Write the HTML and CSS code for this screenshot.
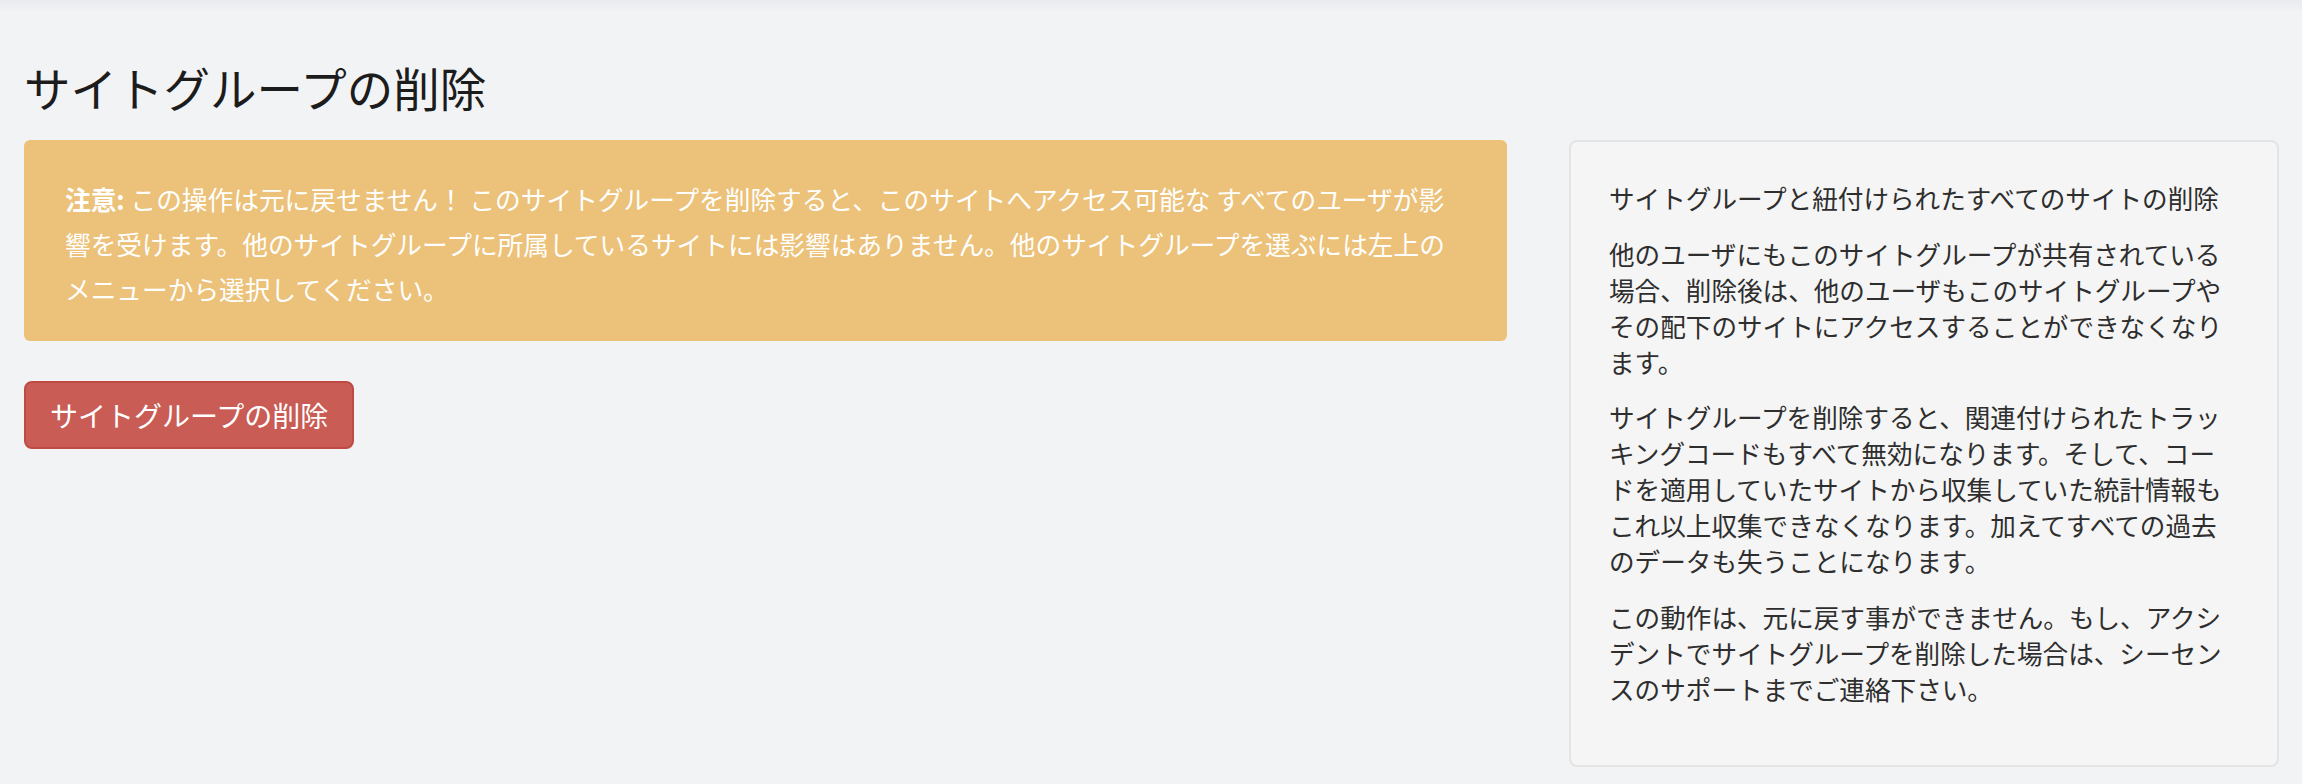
FILE: index.html
```html
<!DOCTYPE html>
<html lang="ja">
<head>
  <meta charset="UTF-8" />
  <meta name="viewport" content="width=device-width, initial-scale=1.0"/>
  <title>サイトグループの削除</title>
  <link rel="stylesheet" href="styles.css">
</head>
<body>
  <div class="topbar"></div>
  <div class="page">
    <h1 class="title">サイトグループの削除</h1>
    <div class="row">
      <div class="main">
        <div class="alert">
          <strong>注意:</strong> この操作は元に戻せません！ このサイトグループを削除すると、このサイトへアクセス可能な すべてのユーザが影響を受けます。他のサイトグループに所属しているサイトには影響はありません。他のサイトグループを選ぶには左上のメニューから選択してください。
        </div>
        <button class="btn-danger">サイトグループの削除</button>
      </div>
      <div class="well">
        <p>サイトグループと紐付けられたすべてのサイトの削除</p>
        <p>他のユーザにもこのサイトグループが共有されている場合、削除後は、他のユーザもこのサイトグループやその配下のサイトにアクセスすることができなくなります。</p>
        <p>サイトグループを削除すると、関連付けられたトラッキングコードもすべて無効になります。そして、コードを適用していたサイトから収集していた統計情報もこれ以上収集できなくなります。加えてすべての過去のデータも失うことになります。</p>
        <p>この動作は、元に戻す事ができません。もし、アクシデントでサイトグループを削除した場合は、シーセンスのサポートまでご連絡下さい。</p>
      </div>
    </div>
  </div>
</body>
</html>
```

FILE: styles.css
```css
body {
  margin: 0;
  background: #f2f3f5;
  color: #333;
  font-family: "Noto Sans CJK JP", "Noto Sans", sans-serif;
}
.topbar {
  height: 10px;
  background: linear-gradient(#eaebee, #f0f1f3);
}
.page { padding: 0 23px 0 24px; }
.title {
  margin: 51px 0 28px;
  font-size: 46.5px;
  font-weight: normal;
  line-height: 1.1;
  color: #1c1c1c;
}
.row {
  display: grid;
  grid-template-columns: 1fr 710px;
  gap: 62px;
  align-items: start;
}
.alert {
  background: #ecc179;
  color: #fff;
  border-radius: 6px;
  padding: 36px 41px 30px 41px;
  font-size: 25.7px;
  line-height: 45px;
  margin-bottom: 40px;
}
.alert strong { font-weight: bold; }
.btn-danger {
  font-family: inherit;
  font-size: 28px;
  line-height: 40px;
  padding: 12px 24px;
  color: #fff;
  background: #c95c55;
  border: 2px solid #bf4a43;
  border-radius: 8px;
  cursor: pointer;
}
.well {
  background: #f5f5f5;
  border: 2px solid #e4e4e4;
  border-radius: 8px;
  padding: 38px 38px 39px;
  font-size: 25.6px;
  line-height: 36px;
  color: #2e2e2e;
}
.well p { margin: 0 0 19.5px; }
```
